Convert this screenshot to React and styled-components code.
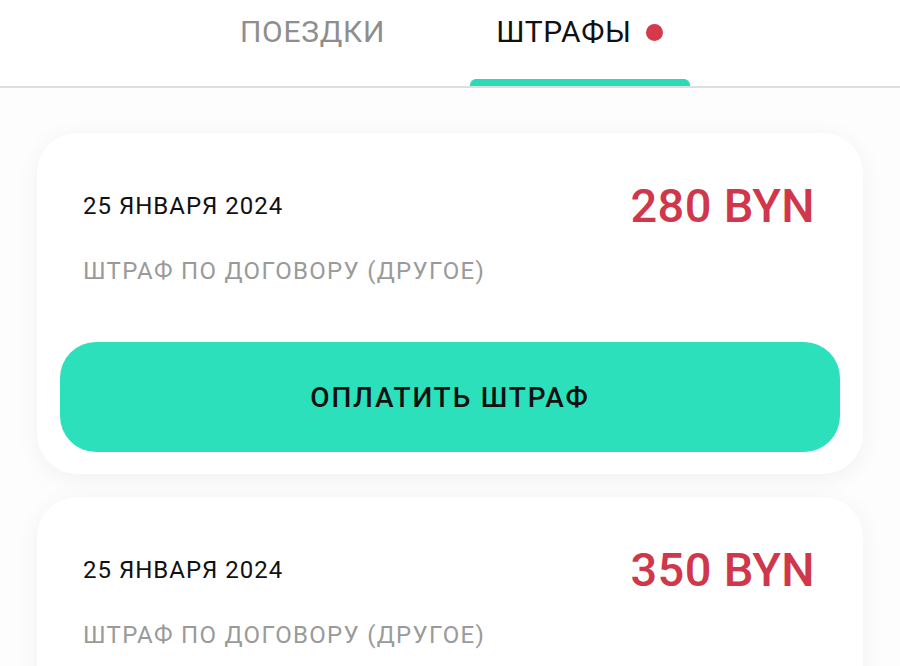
import React from 'react';
import styled, { createGlobalStyle } from 'styled-components';

const GlobalStyle = createGlobalStyle`
  html, body {
    margin: 0;
    padding: 0;
    background: #fdfdfd;
    font-family: Roboto, 'Liberation Sans', sans-serif;
  }
  * { box-sizing: border-box; }
`;

const fines = [
  { id: 1, date: '25 ЯНВАРЯ 2024', amount: '280 BYN', reason: 'ШТРАФ ПО ДОГОВОРУ (ДРУГОЕ)' },
  { id: 2, date: '25 ЯНВАРЯ 2024', amount: '350 BYN', reason: 'ШТРАФ ПО ДОГОВОРУ (ДРУГОЕ)' },
];

function App() {
  return (
    <>
      <GlobalStyle />
      <Page>
        <Tabs>
          <Tab>ПОЕЗДКИ</Tab>
          <Tab active>
            ШТРАФЫ
            <Dot />
          </Tab>
        </Tabs>
        <List>
          {fines.map((f) => (
            <Card key={f.id}>
              <Info>
                <Row>
                  <DateText>{f.date}</DateText>
                  <Amount>{f.amount}</Amount>
                </Row>
                <Reason>{f.reason}</Reason>
              </Info>
              <PayButton>ОПЛАТИТЬ ШТРАФ</PayButton>
            </Card>
          ))}
        </List>
      </Page>
    </>
  );
}

const Page = styled.div`
  width: 900px;
  height: 666px;
  overflow: hidden;
  background: #fdfdfd;
`;

const Tabs = styled.div`
  display: flex;
  justify-content: center;
  gap: 47px;
  height: 88px;
  padding-right: 8px;
  background: #fff;
  border-bottom: 2px solid #dedede;
`;

const Tab = styled.div`
  position: relative;
  width: 220px;
  display: flex;
  justify-content: center;
  align-items: flex-start;
  padding-top: 14px;
  font-size: 30px;
  letter-spacing: 0.7px;
  color: ${(p) => (p.active ? '#111' : '#8e8e8e')};
  &::after {
    content: '';
    display: ${(p) => (p.active ? 'block' : 'none')};
    position: absolute;
    left: 0;
    right: 0;
    bottom: 0;
    height: 7px;
    border-radius: 6px 6px 0 0;
    background: #2cdbb5;
  }
`;

const Dot = styled.span`
  width: 17px;
  height: 17px;
  border-radius: 50%;
  background: #d6384c;
  margin-left: 14px;
  margin-top: 10px;
`;

const List = styled.div`
  display: flex;
  flex-direction: column;
  gap: 23px;
  padding: 45px 37px 0;
`;

const Card = styled.div`
  background: #fff;
  border-radius: 40px;
  box-shadow: 0 4px 24px rgba(0, 0, 0, 0.05);
  padding: 0 23px 22px;
`;

const Info = styled.div`
  padding: 45px 25px 57px 23px;
`;

const Row = styled.div`
  display: flex;
  justify-content: space-between;
  align-items: center;
`;

const DateText = styled.div`
  font-size: 24px;
  letter-spacing: 1px;
  color: #111;
`;

const Amount = styled.div`
  font-size: 47px;
  font-weight: 500;
  letter-spacing: 0.3px;
  color: #d1374b;
`;

const Reason = styled.div`
  margin-top: 24px;
  font-size: 24px;
  letter-spacing: 1.3px;
  color: #9a9a9a;
`;

const PayButton = styled.button`
  display: block;
  width: 100%;
  height: 110px;
  border: none;
  border-radius: 36px;
  background: #2ce0bb;
  color: #111;
  font-family: inherit;
  font-size: 28px;
  font-weight: 500;
  letter-spacing: 1.8px;
  cursor: pointer;
`;

export default App;
